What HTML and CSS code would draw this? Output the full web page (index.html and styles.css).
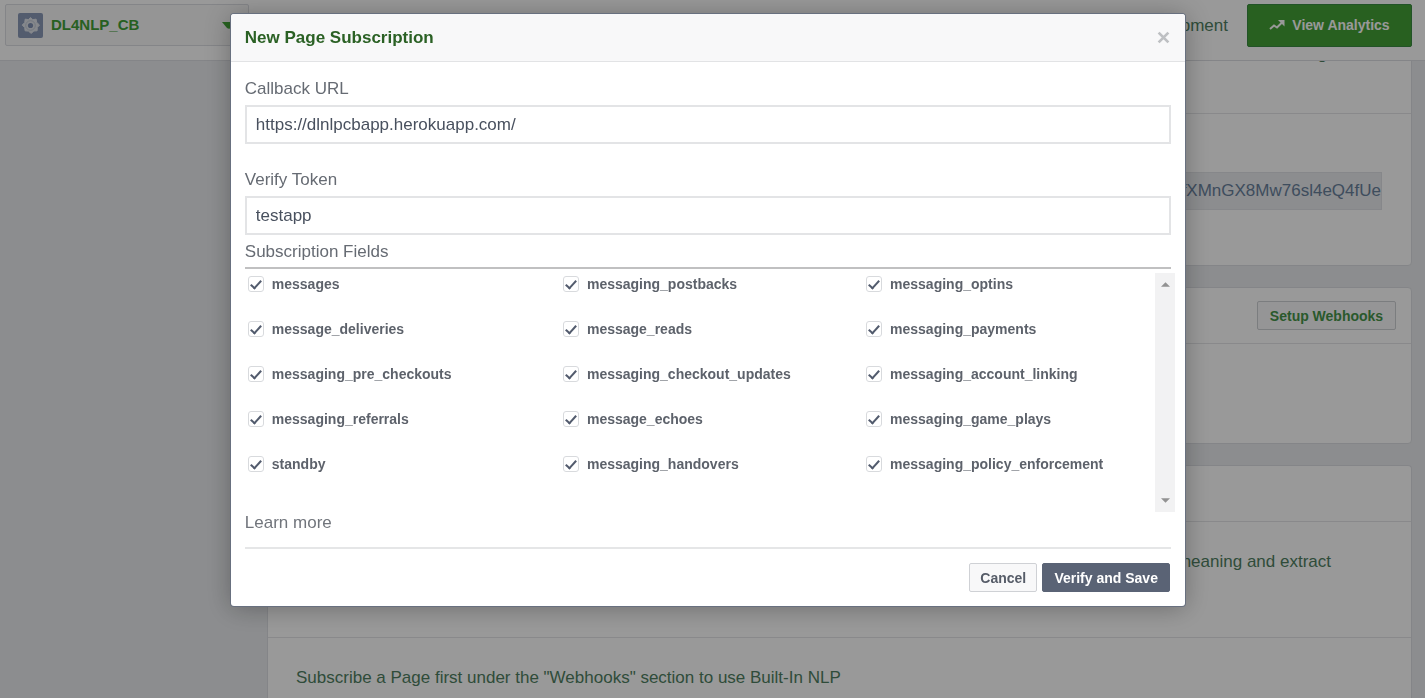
FILE: index.html
```html
<!DOCTYPE html>
<html lang="en">
<head>
<meta charset="utf-8">
<title>DL4NLP_CB</title>
<link rel="stylesheet" href="styles.css">
</head>
<body>
<header class="topbar">
  <button class="app-picker" type="button">
    <svg class="app-icon" viewBox="0 0 25 25" aria-hidden="true">
      <rect width="25" height="25" rx="2" fill="#8a99b8"/>
      <path d="M12.500 4.500l2.300 2.200 3.300-.6.600 3.300 2.800 2.600-2.200 2.500-.2 3.300-3.200.2-2.700 2.400-2.800-2.300-3.300-.3-.4-3.200-2.500-2.500 2.500-2.600.5-3.400 3.200.5z" fill="#dfe3ea" stroke="#dfe3ea" stroke-linejoin="round"/>
      <circle cx="12.500" cy="12.500" r="4.800" fill="none" stroke="#c0c8d6" stroke-width="1"/>
      <circle cx="12.500" cy="12.500" r="2.600" fill="#7f90b3"/>
    </svg>
    <span>DL4NLP_CB</span>
    <svg class="caret" viewBox="0 0 14 7" aria-hidden="true"><path d="M0 0h14L9 6q-2 1.500-4 0z" fill="#42a636"/></svg>
  </button>
  <div class="topbar-end">
    <span class="status">In development</span>
    <button class="analytics" type="button">
      <svg viewBox="0 0 16 12" aria-hidden="true"><path d="M1 10l4-3.500 3 2L13 3.500" fill="none" stroke="#fff" stroke-width="2"/><path d="M9 1h6.500v6.500z" fill="#fff"/></svg>
      View Analytics
    </button>
  </div>
</header>

<main class="content">
  <section class="card">
    <p class="intro">setting</p>
    <div class="token-row"><span class="token">IfXMnGX8Mw76sl4eQ4fUe</span></div>
  </section>
  <section class="card">
    <div class="card-head"><button class="setup" type="button">Setup Webhooks</button></div>
    <div class="card-blank"></div>
  </section>
  <section class="card card-last">
    <div class="card-head"></div>
    <p class="nlp-text">meaning and extract</p>
    <p class="nlp-note">Subscribe a Page first under the "Webhooks" section to use Built-In NLP</p>
  </section>
</main>

<div class="overlay">
  <form class="dialog" role="dialog" aria-labelledby="dialog-title">
    <div class="dialog-head">
      <h2 id="dialog-title">New Page Subscription</h2>
      <button class="close" type="button" aria-label="Close">
        <svg viewBox="0 0 12 12" aria-hidden="true"><path d="M1.500 1.500l9 9M10.500 1.500l-9 9" stroke="#bec0c3" stroke-width="2.500"/></svg>
      </button>
    </div>
    <div class="dialog-body">
      <div class="field">
        <label for="callback">Callback URL</label>
        <input id="callback" class="text" type="text" value="https://dlnlpcbapp.herokuapp.com/">
      </div>
      <div class="field">
        <label for="verify">Verify Token</label>
        <input id="verify" class="text" type="text" value="testapp">
      </div>
      <fieldset class="subscriptions">
        <legend>Subscription Fields</legend>
        <div class="list">
          <div class="options">
            <label><input type="checkbox" checked>messages</label>
            <label><input type="checkbox" checked>messaging_postbacks</label>
            <label><input type="checkbox" checked>messaging_optins</label>
            <label><input type="checkbox" checked>message_deliveries</label>
            <label><input type="checkbox" checked>message_reads</label>
            <label><input type="checkbox" checked>messaging_payments</label>
            <label><input type="checkbox" checked>messaging_pre_checkouts</label>
            <label><input type="checkbox" checked>messaging_checkout_updates</label>
            <label><input type="checkbox" checked>messaging_account_linking</label>
            <label><input type="checkbox" checked>messaging_referrals</label>
            <label><input type="checkbox" checked>message_echoes</label>
            <label><input type="checkbox" checked>messaging_game_plays</label>
            <label><input type="checkbox" checked>standby</label>
            <label><input type="checkbox" checked>messaging_handovers</label>
            <label><input type="checkbox" checked>messaging_policy_enforcement</label>
          </div>
          <div class="scroller" aria-hidden="true">
            <svg viewBox="0 0 10 5"><path d="M5 0l5 5H0z" fill="#929292"/></svg>
            <svg viewBox="0 0 10 5"><path d="M0 0h10L5 5z" fill="#929292"/></svg>
          </div>
        </div>
      </fieldset>
      <a class="more" href="#">Learn more</a>
      <div class="actions">
        <button class="cancel" type="button">Cancel</button>
        <button class="save" type="submit">Verify and Save</button>
      </div>
    </div>
  </form>
</div>
</body>
</html>
```

FILE: styles.css
```css
*, ::after { box-sizing: border-box; }

body {
  margin: 0;
  background: #e9ebee;
  color: #4f7f62;
  font: 17px/20px "Liberation Sans", Arial, sans-serif;
}

h2, p, fieldset { margin: 0; }
button, input { font: inherit; }
svg { display: block; }

.topbar {
  position: fixed;
  z-index: 1;
  top: 0;
  left: 0;
  right: 0;
  display: flex;
  justify-content: space-between;
  align-items: flex-start;
  height: 61px;
  padding: 4px 13px 0 5px;
  background: #fff;
  border-bottom: 1px solid #dcdee3;
}

.app-picker {
  display: flex;
  align-items: center;
  gap: 8px;
  width: 244px;
  height: 42px;
  padding: 0 12px;
  background: #f8f8f9;
  border: 1px solid #dcdee3;
  border-radius: 2px;
  color: #42a038;
  font-size: 15px;
  font-weight: bold;
}

.app-icon { width: 25px; height: 25px; }
.caret { width: 14px; height: 7px; margin-left: auto; }

.topbar-end { display: flex; align-items: center; gap: 19px; }

.analytics {
  display: flex;
  align-items: center;
  justify-content: center;
  gap: 7px;
  width: 165px;
  height: 43px;
  padding: 0 0 2px;
  background: #44a036;
  border: 1px solid #3a8a42;
  border-radius: 2px;
  color: #fff;
  font-size: 14px;
  font-weight: bold;
}

.analytics svg { width: 16px; height: 12px; }

.content {
  display: flex;
  flex-direction: column;
  gap: 21px;
  height: 100vh;
  margin: 0 13px 0 267px;
}

.card {
  flex: none;
  background: #fff;
  border: 1px solid #dcdee3;
  border-radius: 4px;
}

.card-last {
  flex: 1 0 auto;
  border-bottom: 0;
  border-radius: 4px 4px 0 0;
}

.intro {
  height: 113px;
  padding: 43px 84px 0 29px;
  border-bottom: 1px solid #e4e5e8;
  text-align: right;
}

.token-row {
  display: flex;
  justify-content: flex-end;
  height: 151px;
  padding: 58px 29px 0;
}

.token {
  height: 38px;
  padding-left: 29px;
  background: #e9ebee;
  border: 1px solid #e0e2e6;
  color: #68809c;
  line-height: 36px;
}

.card-head {
  display: flex;
  align-items: center;
  justify-content: flex-end;
  height: 56px;
  padding: 0 15px;
  border-bottom: 1px solid #e4e5e8;
}

.setup {
  width: 139px;
  height: 29px;
  padding: 0;
  background: #f9f9fa;
  border: 1px solid #ced0d4;
  border-radius: 2px;
  color: #46954a;
  font-size: 14px;
  font-weight: bold;
}

.card-blank { height: 99px; }

.nlp-text {
  height: 116px;
  padding: 30px 80px 0 29px;
  border-bottom: 1px solid #e4e5e8;
  text-align: right;
}

.nlp-note { padding: 30px 28px 0; }

.overlay {
  position: fixed;
  z-index: 2;
  inset: 0;
  display: flex;
  justify-content: center;
  align-items: flex-start;
  padding: 14px 9px 0 0;
  background: rgba(0, 0, 0, 0.4);
}

.dialog {
  width: 67.4%;
  background: #fff;
  border-radius: 3px;
  box-shadow: 0 0 0 1px #68707f, 0 2px 26px rgba(0, 0, 0, 0.3);
  color: #666b73;
}

.dialog-head {
  display: flex;
  align-items: center;
  justify-content: space-between;
  height: 48px;
  padding: 0 15px 0 14px;
  background: #f8f8f9;
  border-bottom: 1px solid #e2e3e5;
  border-radius: 3px 3px 0 0;
}

.dialog-head h2 { color: #2b6125; font-size: 17px; }

.close { padding: 0; background: none; border: 0; }
.close svg { width: 13px; height: 13px; }

.dialog-body { padding: 17px 14px 14px; }

.field { margin-bottom: 26px; }
.field:nth-child(2) { margin-bottom: 7px; }
.field label { display: block; margin-bottom: 6px; }

.text {
  display: block;
  width: 100%;
  height: 39px;
  padding: 0 9px;
  background: #fff;
  border: 2px solid #e3e4e6;
  color: #48505e;
}

.subscriptions { min-width: 0; padding: 0; border: 0; }

.subscriptions legend {
  width: 100%;
  padding: 0 0 5px;
  border-bottom: 2px solid #c0c0c1;
}

.list {
  display: flex;
  height: 243px;
  margin-right: -4px;
  padding-top: 4px;
}

.options {
  display: grid;
  flex: 1;
  grid-template-columns: 315fr 303fr 289fr;
  align-content: start;
  row-gap: 27px;
  padding: 2px 0 0 3px;
}

.options label {
  display: flex;
  align-items: center;
  gap: 8px;
  height: 18px;
  color: #5d626b;
  font-size: 14px;
  font-weight: bold;
}

.options input {
  display: grid;
  place-items: center;
  width: 16px;
  height: 16px;
  margin: 0;
  appearance: none;
  background: #fff;
  border: 1px solid #d8dadd;
  border-radius: 3px;
}

.options input:checked::after {
  content: "";
  width: 6px;
  height: 11px;
  margin-bottom: 2px;
  border: solid #525b6d;
  border-width: 0 2px 2px 0;
  transform: rotate(42deg);
}

.scroller {
  display: flex;
  flex-direction: column;
  justify-content: space-between;
  align-items: center;
  width: 20px;
  padding: 9px 0;
  background: #f2f2f3;
}

.scroller svg { width: 9px; height: 5px; }

.more {
  display: block;
  padding: 1px 0 14px;
  color: #71757c;
  text-decoration: none;
}

.actions {
  display: flex;
  justify-content: flex-end;
  gap: 5px;
  padding: 14px 1px 0 0;
  border-top: 2px solid #e5e6e7;
}

.actions button {
  height: 29px;
  padding: 0 10px;
  border: 1px solid #cfd1d5;
  border-radius: 2px;
  font-size: 14px;
  font-weight: bold;
}

.cancel { background: #f8f8f9; color: #565c68; }
.actions .save { min-width: 128px; background: #5a6375; border-color: #5a6375; color: #fff; }
```
